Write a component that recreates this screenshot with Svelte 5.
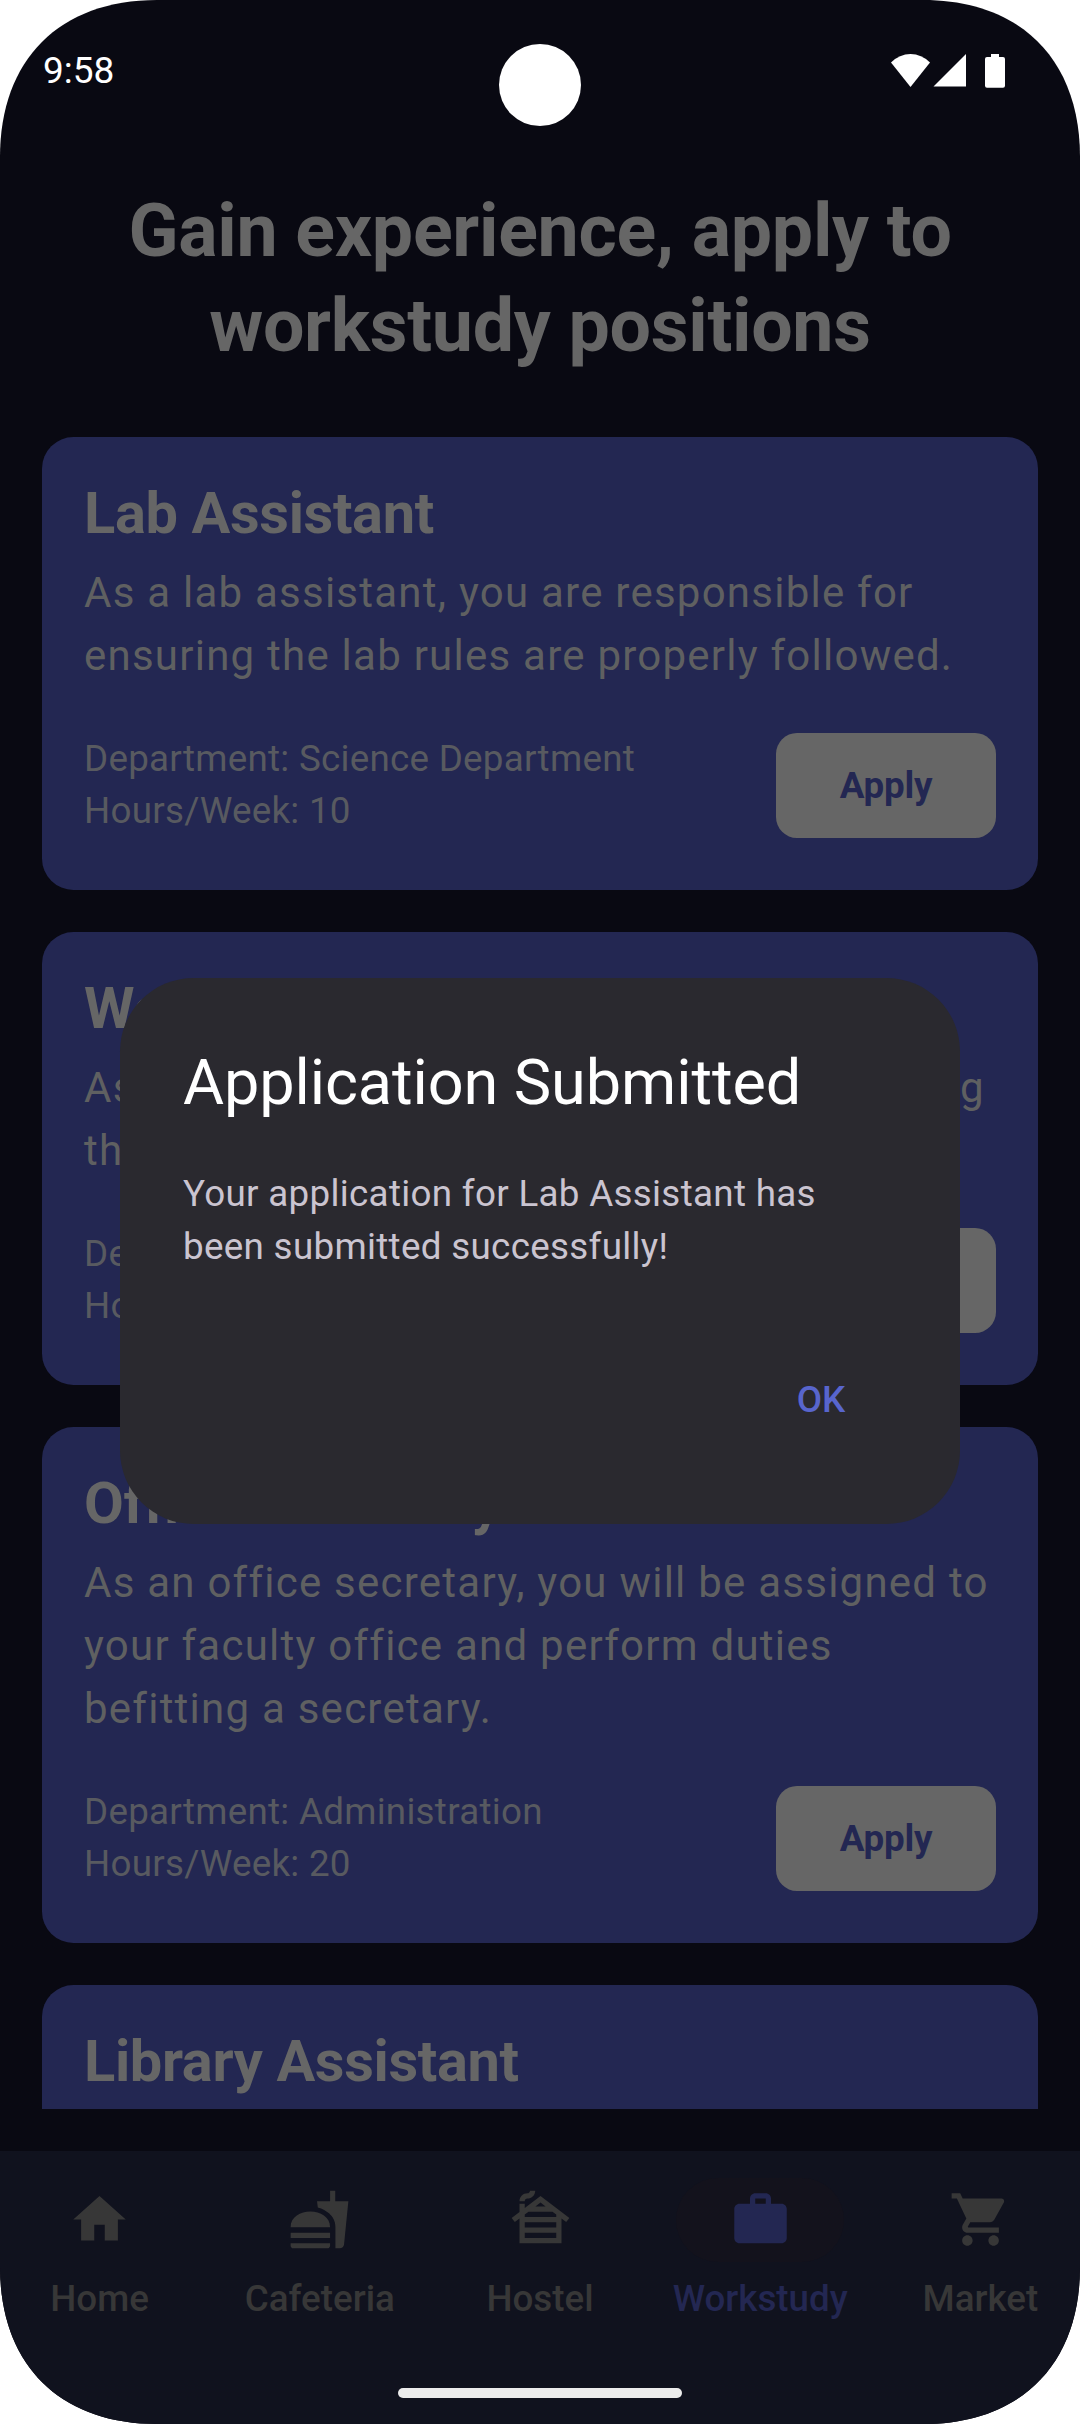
<script>
  const jobs = [
    {
      title: 'Lab Assistant',
      lines: ['As a lab assistant, you are responsible for', 'ensuring the lab rules are properly followed.'],
      department: 'Science Department',
      hours: 10
    },
    {
      title: 'Web Developer',
      lines: ['As a web developer, you will help in designing', 'the school website.'],
      department: 'ICT Department',
      hours: 15
    },
    {
      title: 'Office Secretary',
      lines: [
        'As an office secretary, you will be assigned to',
        'your faculty office and perform duties',
        'befitting a secretary.'
      ],
      department: 'Administration',
      hours: 20
    },
    {
      title: 'Library Assistant',
      lines: ['As a library assistant, you will help to', 'keep the shelves in order.'],
      department: 'Library',
      hours: 12
    }
  ];

  const tabs = [
    { label: 'Home', icon: 'M10 20v-6h4v6h5v-8h3L12 3 2 12h3v8z' },
    {
      label: 'Cafeteria',
      icon: 'M18.06 22.99h1.66c.84 0 1.53-.64 1.63-1.46L23 5.05h-5V1h-1.97v4.05h-4.97l.3 2.34c1.71.47 3.31 1.32 4.27 2.26 1.44 1.42 2.43 2.89 2.43 5.29v8.05zM1 21.99V21h15.03v.99c0 .55-.45 1-1.01 1H2.01c-.56 0-1.01-.45-1.01-1zm15.03-7c0-8-15.03-8-15.03 0h15.03zM1.02 17h15v2h-15z'
    },
    {
      label: 'Hostel',
      icon: 'M10 1c0 1.66-1.34 3-3 3-.55 0-1 .45-1 1H4c0-1.66 1.34-3 3-3 .55 0 1-.45 1-1h2zM12 3L6 7.58V6H4v3.11L1 11.4l1.21 1.59L4 11.62V21h16v-9.38l1.79 1.36L23 11.4 12 3zm1.94 4h-3.89L12 5.52 13.94 7zM7.44 9h9.12L18 10.1v.9H6v-.9L7.44 9zM18 13v2H6v-2h12zM6 19v-2h12v2H6z'
    },
    {
      label: 'Workstudy',
      active: true,
      icon: 'M20 6h-4V4c0-1.11-.89-2-2-2h-4c-1.11 0-2 .89-2 2v2H4c-1.11 0-1.99.89-1.99 2L2 19c0 1.11.89 2 2 2h16c1.11 0 2-.89 2-2V8c0-1.11-.89-2-2-2zm-6 0h-4V4h4v2z'
    },
    {
      label: 'Market',
      icon: 'M7 18c-1.1 0-1.99.9-1.99 2S5.9 22 7 22s2-.9 2-2-.9-2-2-2zM1 2v2h2l3.6 7.59-1.35 2.45c-.16.28-.25.61-.25.96 0 1.1.9 2 2 2h12v-2H7.42c-.14 0-.25-.11-.25-.25l.03-.12.9-1.63h7.45c.75 0 1.41-.41 1.75-1.03l3.58-6.49c.08-.14.12-.31.12-.48 0-.55-.45-1-1-1H5.21l-.94-2H1zm16 16c-1.1 0-1.99.9-1.99 2s.89 2 1.99 2 2-.9 2-2-.9-2-2-2z'
    }
  ];
</script>

<div class="phone">
  <header class="status">
    <span class="time">9:58</span>
    <svg class="indicators" width="116" height="36" viewBox="0 0 116 36">
      <path d="M0 9.5Q8.5 1 19.5 1T39 9.5L19.5 34z" />
      <path d="M75 1v32.6H42.5z" />
      <path d="M100 1h8v3h4a2 2 0 0 1 2 2v26.7a2 2 0 0 1-2 2H96a2 2 0 0 1-2-2V6a2 2 0 0 1 2-2h4z" />
    </svg>
    <div class="camera"></div>
  </header>

  <h1>Gain experience, apply to<br />workstudy positions</h1>

  <main class="jobs">
    {#each jobs as job}
      <article class="card">
        <h2>{job.title}</h2>
        <p class="description">
          {#each job.lines as line}<span>{line}</span>{/each}
        </p>
        <div class="row">
          <div class="meta">
            <div>Department: {job.department}</div>
            <div>Hours/Week: {job.hours}</div>
          </div>
          <button class="apply">Apply</button>
        </div>
      </article>
    {/each}
  </main>

  <nav class="tabs">
    {#each tabs as tab}
      <div class="tab" class:active={tab.active}>
        <span class="pill">
          <svg width="63" height="63" viewBox="0 0 24 24"><path fill-rule="evenodd" d={tab.icon} /></svg>
        </span>
        <span class="label">{tab.label}</span>
      </div>
    {/each}
  </nav>
  <div class="home-bar"></div>

  <div class="overlay">
    <section class="dialog">
      <h3>Application Submitted</h3>
      <p>Your application for Lab Assistant has<br />been submitted successfully!</p>
      <div class="actions"><button class="ok">OK</button></div>
    </section>
  </div>
</div>

<style>
  :global(body) {
    margin: 0;
    background: #fff;
  }
  .phone {
    position: relative;
    display: flex;
    flex-direction: column;
    width: 1080px;
    height: 2424px;
    overflow: hidden;
    background: #090912;
    color: #666;
    font-family: Roboto, 'Liberation Sans', sans-serif;
    clip-path: path('M0 157C0 59.5 59.5 0 157 0H923C1020.5 0 1080 59.5 1080 157V2267C1080 2364.5 1020.5 2424 923 2424H157C59.5 2424 0 2364.5 0 2267Z');
  }
  h1, h2, h3, p {
    margin: 0;
  }
  button {
    border: 0;
    padding: 0;
    background: none;
    font-family: inherit;
  }
  .status {
    display: flex;
    justify-content: space-between;
    align-items: center;
    box-sizing: border-box;
    flex: none;
    height: 142px;
    padding: 0 73px 0 43px;
    color: #fff;
  }
  .time {
    padding-bottom: 2px;
    font-size: 37px;
  }
  .indicators {
    fill: #fff;
  }
  .camera {
    position: absolute;
    left: 499px;
    top: 44px;
    width: 82px;
    height: 82px;
    border-radius: 50%;
    background: #fff;
  }
  h1 {
    flex: none;
    padding: 42px 42px 63.5px;
    font-size: 73.5px;
    font-weight: 700;
    line-height: 94.5px;
    letter-spacing: -0.28px;
    text-align: center;
  }
  .jobs {
    display: flex;
    flex-direction: column;
    gap: 42px;
    flex: 1;
    min-height: 0;
    margin: 0 42px 42px;
    overflow: hidden;
  }
  .card {
    flex: none;
    padding: 42px 42px 52px;
    border-radius: 31.5px;
    background: #232752;
  }
  h2 {
    font-size: 57.75px;
    font-weight: 700;
    line-height: 68px;
    letter-spacing: -0.35px;
  }
  .description {
    margin-top: 14px;
    font-size: 42px;
    line-height: 63px;
    letter-spacing: 1.24px;
    color: #5f6061;
  }
  .description span {
    display: block;
    white-space: nowrap;
  }
  .row {
    display: flex;
    justify-content: space-between;
    align-items: center;
    margin-top: 46px;
  }
  .meta {
    font-size: 36.75px;
    line-height: 52.5px;
    letter-spacing: 0.27px;
    color: #585a60;
  }
  .apply {
    width: 220px;
    height: 105px;
    border-radius: 21px;
    background: #666;
    color: #232752;
    font-size: 36.75px;
    font-weight: 700;
    letter-spacing: -0.2px;
  }
  .tabs {
    display: flex;
    gap: 21px;
    box-sizing: border-box;
    flex: none;
    height: 273px;
    padding-top: 26.5px;
    background: #10121e;
  }
  .tab {
    display: flex;
    flex: 1 1 0;
    flex-direction: column;
    align-items: center;
    min-width: 0;
    color: #373737;
    fill: #373737;
  }
  .pill {
    display: flex;
    justify-content: center;
    align-items: center;
    width: 168px;
    height: 84px;
    border-radius: 42px;
  }
  .active {
    color: #232752;
    fill: #232752;
  }
  .active .pill {
    background: #13121c;
  }
  .label {
    margin-top: 11px;
    font-size: 36.75px;
    font-weight: 500;
    line-height: 52.5px;
  }
  .home-bar {
    position: absolute;
    left: 398px;
    bottom: 26px;
    width: 284px;
    height: 10px;
    border-radius: 5px;
    background: #ececec;
  }
  .overlay {
    position: absolute;
    inset: 0;
    display: flex;
    justify-content: center;
    align-items: flex-start;
    padding-top: 978px;
  }
  .dialog {
    box-sizing: border-box;
    width: 840px;
    height: 546px;
    padding: 63px;
    border-radius: 73.5px;
    background: #2a292f;
  }
  .dialog h3 {
    color: #fff;
    font-size: 63px;
    font-weight: 400;
    line-height: 84px;
    letter-spacing: -0.1px;
  }
  .dialog p {
    margin-top: 43px;
    color: #cac4d0;
    font-size: 36.75px;
    line-height: 52.5px;
    letter-spacing: 0.32px;
  }
  .actions {
    display: flex;
    justify-content: flex-end;
    margin-top: 74px;
  }
  .ok {
    width: 152px;
    height: 105px;
    color: #5865cd;
    font-size: 36.75px;
    font-weight: 500;
  }
</style>
